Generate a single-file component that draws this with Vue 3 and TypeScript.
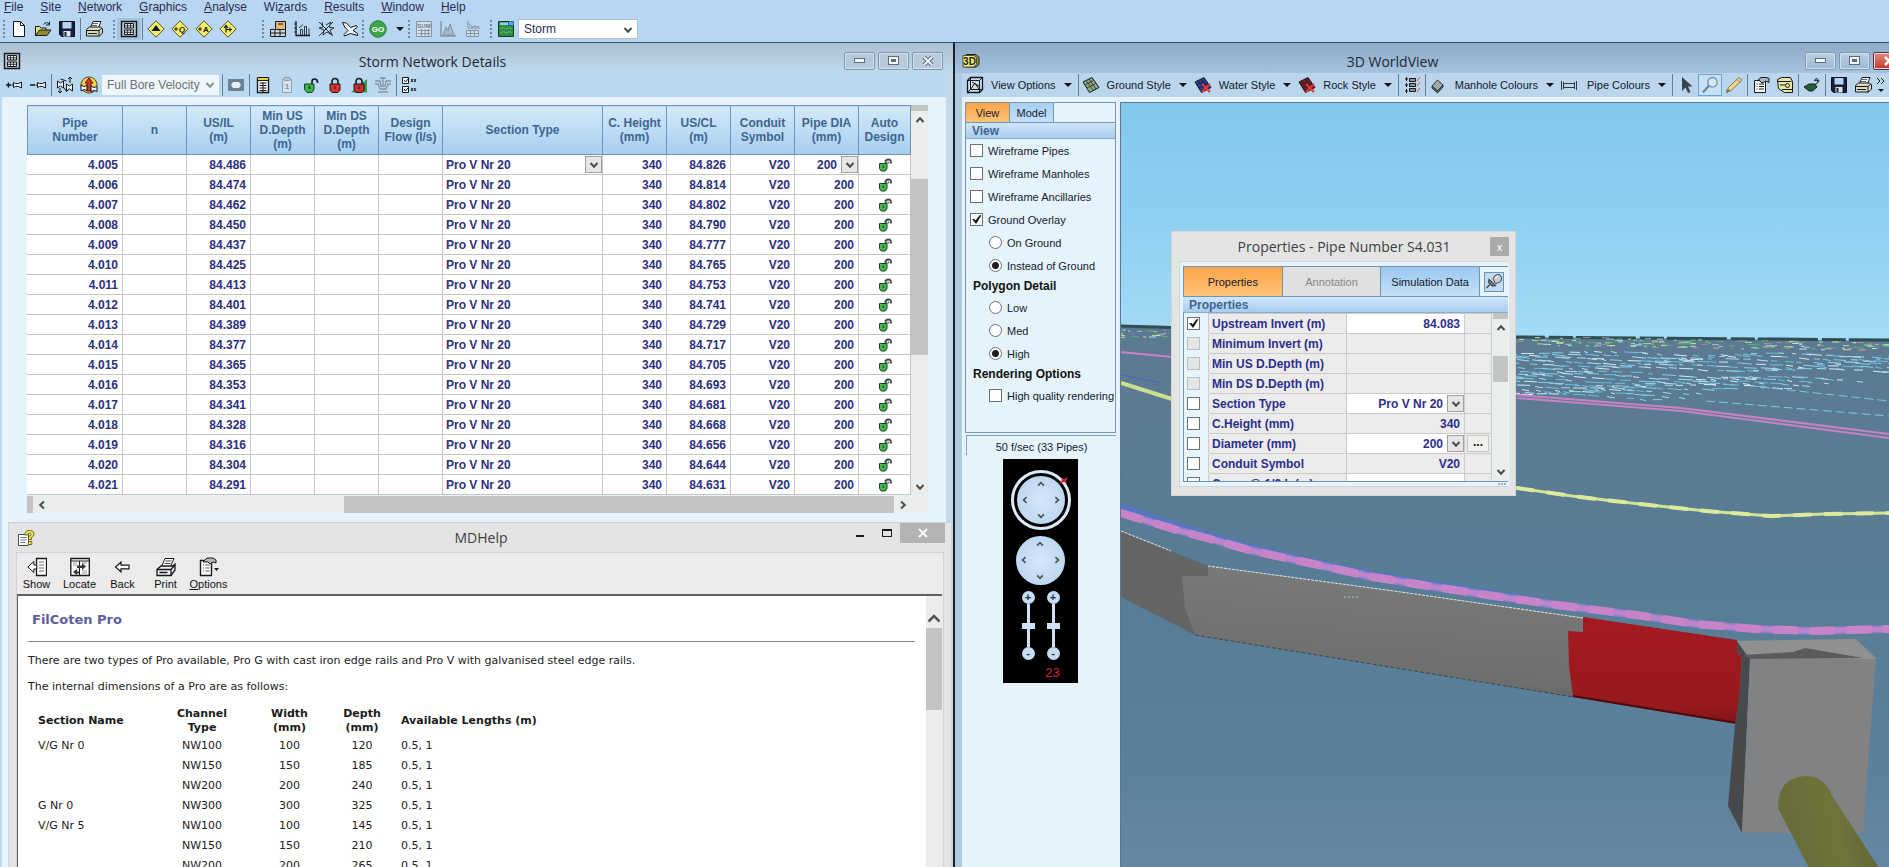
<script setup lang="ts">
import { h, ref } from 'vue'

type Stroke = [d: string, fill: string, stroke?: string, width?: number]
type Label = { t: string; x: number; y: number; s: number; c: string }
type Glyph = Stroke | Label

const K = '#15181c'
const diamond: Stroke = ['M9 .8L17.2 9 9 17.2.8 9z', '#f3ee62', '#55563a']
const printer: Glyph[] = [
  ['M5.5 7.5l2.5-6h8l-2.5 6z', '#fff', K],
  ['M8 3.5h5M7 5.5h5', 'none', '#666'],
  ['M1.500 9.500l3-2.500h11l2 2v4l-3 3h-13z', '#d9dcc2', K],
  ['M1.500 10.500h12.500v6M14 10.500l3-2.500M3 13.500h9', 'none', K],
]
const disk: Glyph[] = [
  ['M1.500 1.500h15v15h-13l-2-2z', '#16203a', '#0b1020'],
  ['M4.500 2h9v6.500h-9z', '#b5d3ee'],
  ['M5.500 11h7v5.500h-7z', '#dfe6ee'],
  ['M6.500 12h2v4h-2z', '#16203a'],
]
const lock = (c: string): Glyph[] => [
  ['M6 8V5.500q0-3 3-3t3 3V8', 'none', K, 1.600],
  ['M4 8h10v6l-2 2.500H6L4 14z', c, K],
  ['M9 10v3', 'none', '#333', 1.500],
]
const meshTile = (a: string): Glyph[] => [
  ['M1 6l9-4.500 7 10-9.500 5z', a, '#141820'],
  ['M4 4.500l7.500 10M7 3l7 10M3 9l8.500-4.500M5 12l8.500-4.500', 'none', '#1b2228', 0.8],
]
const cross: Stroke = ['M8 8l8 8M16 8l-8 8', 'none', '#e23438', 2.200]

const icons: Record<string, Glyph[]> = {
  page: [['M3.500 1.500h7l4 4v11h-11z', '#fff', K], ['M10.500 1.500v4h4', 'none', K]],
  open: [
    ['M1.500 15.500v-9h4l1.500 1.500h5v3', '#e6e27a', K],
    ['M1.500 15.500l4-5.500h11.500l-4 5.500z', '#8f8e2e', K],
    ['M9.500 4.500q3-3.500 5.500-.5M15.500 1.500V5h-3.500', 'none', K],
  ],
  save: disk,
  print: printer,
  grid: [
    ['M1.500 1.500h15v15h-15z', '#b9c6d2', K, 1.400],
    ['M4.500 3.500h9v4.500h-9zM4.500 10h9v4.500h-9z', '#e4ebf2', K],
    ['M4.500 5.800h9M7.500 3.500v4.500M10.500 3.500v4.500M4.500 12.300h9M7.500 10v4.500M10.500 10v4.500', 'none', K, 0.8],
  ],
  dTri: [diamond, ['M9 5l4.500 6h-9z', K]],
  dQ: [diamond, ['M3 9h4M5 7v4', 'none', K], { t: 'Q', x: 11, y: 12, s: 8, c: K }],
  dA: [diamond, ['M3 9h4M5 7v4', 'none', K], { t: 'A', x: 11, y: 12, s: 8, c: K }],
  dArr: [diamond, ['M7 12.500V6M5 8l2-2.500L9 8M7 9.500h6M11 7.500v4', 'none', K, 1.200]],
  cube: [
    ['M6.500 1.500h10v8h-10z', '#e2b978', K],
    ['M1.500 9.500h15v7h-15z', '#cfd6dc', K],
    ['M1.500 13h15M6 9.500v7M11 9.500v7M9 4h5', 'none', K],
  ],
  chart: [
    ['M3 1v14.500h14', 'none', K, 1.300],
    ['M1 4h3M1 8h3M1 12h3M7.500 15V9.500h2V15M11.500 15V6.500h2V15M16 15V8.500M6 8l4-3.500', 'none', '#33383e'],
  ],
  fish: [['M2 2l14 14M5 2l1 5-4 1 5 2-1 5 4-3 5 3-2-5 4-2-5-1 2-5-5 3M2 16L16 2', 'none', '#2c3136', 1]],
  plane: [['M1.500 2.500l4 .5 4 4.500 6-2 1 1.500-4.500 3.500 4.500 3v2l-7-2-6 2.500-.5-1.500 4-4-3-3z', '#eef3f7', K]],
  go: [
    ['M9 .8a8.200 8.200 0 1 0 .01 0z', '#3aa648', '#2a7a35'],
    { t: 'GO', x: 9, y: 12, s: 8, c: '#fff' },
  ],
  sum: [
    ['M1.500 1.500h15v15h-15z', '#d3dfe9', '#8494a2'],
    { t: 'SUM', x: 9, y: 8, s: 6, c: '#6b7b89' },
    ['M3 10.500h12M3 13.500h12M6.500 9v7M10 9v7M13.500 9v7', 'none', '#8494a2'],
  ],
  peak: [['M2 1v15h15', 'none', '#8494a2', 1.400], ['M4 15l3-8 2 4 2-7 4 11z', '#a7b8c7', '#8494a2']],
  plot: [['M5 1v7h12M5 3l4 4 3-1 4 1', 'none', '#8494a2'], ['M3.500 10.500h12v6h-12zM3.500 13.500h12M7.500 10.500v6M11.500 10.500v6', '#d3dfe9', '#8494a2']],
  book: [
    ['M1.500 1.500h11l4 4v11h-15z', '#2e8d45', '#143c1f'],
    ['M3 2.500h8v2.500H3z', '#8fd0f0'],
    ['M3.500 9l3-1.500 3 1.500 3-1.500 2 1M3.500 13l3-1.500 3 1.500 3-1.500 2 1', 'none', '#5fc06d'],
    ['M11.500 1.500h5v4h-5z', '#58aee0', '#1e4f80', 0.8],
  ],
  pipeAdd: [['M1 9h5M3.500 6.500v5', 'none', K, 1.500], ['M6.500 9h2M8.500 6.500l2 1h3l3-1.500v6l-3-1.500h-3l-2 1z', '#e8eef4', K]],
  pipeDel: [['M1 9h5', 'none', K, 1.500], ['M6.500 9h2M8.500 6.500l2 1h3l3-1.500v6l-3-1.500h-3l-2 1z', '#e8eef4', K]],
  pipeSet: [
    ['M4 12v5M2 15l2 2 2-2M14 1v6M12 3l2-2 2 2', 'none', K],
    ['M1.500 5l3 2 3-2v7l-3-2-3 2zM10.500 8l3 2 3-2v7l-3-2-3 2z', '#eef3f7', K],
    ['M4.500 3l6 2M8 12l3 4', 'none', K],
  ],
  pipeWarn: [
    ['M9 1a8 8 0 1 0 .01 0z', '#f3d447', '#524b20'],
    ['M5 7l4-5 4 5h-2v8H7V7z', '#c93a2c', '#561410'],
    ['M1 9l3 1.500 3-1v5l-3-1-3 1.500zM11 10l3 1.500 3-1v5l-3-1-3 1z', '#eef3f7', K],
  ],
  outline: [['M1 3h16v12H1z', '#6c8096'], ['M6 6h6l2 3-2 3H6L4 9z', '#e6eff8']],
  sheet: [
    ['M3.500 2.500h11v14h-11z', '#fff', K, 1.400],
    ['M3.500 1.500h11v3h-11z', '#ecd23d', K],
    ['M5.500 7h7M5.500 9.500h7M5.500 12h7M5.500 14.500h7M9 6v10', 'none', K],
  ],
  sheetOff: [['M4.500 3.500h9v13h-9z', '#d5e3ef', '#8fa0b0'], ['M6 1.500h6v3H6z', '#b9c8d5', '#8fa0b0'], { t: '1', x: 9, y: 13, s: 8, c: '#8494a2' }],
  unlock: [
    ['M10 8V5.500q0-2.500 2.500-2.500t3 2.500V7', 'none', K, 1.600],
    ['M2.500 8h9.500v5.500l-2 3H5l-2.500-3z', '#3fae4c', '#15451c'],
    ['M7.500 10v3', 'none', '#12361a', 1.500],
  ],
  lock: lock('#e0302f'),
  lockHill: [['M1 16.500h16V3z', '#3a9a3f'], ...lock('#d42a2a')],
  section: [['M1 5h5l1 5h4l1-5h5M1 8h3l2 5h6l2-5h3M9 1v8M6 2h6M4 16h10', 'none', '#8494a2', 1.300]],
  checks: [
    ['M1.500 1.500h6v6h-6zM1.500 10.500h6v6h-6z', '#fff', K],
    ['M3 4l1.500 2L8 2M3 13l1.500 2L8 11', 'none', K],
    ['M10 3l2 3M12 3l-2 3M13 3l2 3M15 3l-2 3M10 12l2 3M12 12l-2 3M13 12l2 3M15 12l-2 3', 'none', K, 0.9],
  ],
  threeD: [
    ['M4 2.500h10l3 3v7l-3 2.500H4', '#8f8c35', '#222'],
    ['M1 3.500h11l2.500 2.500v6L12 15H1z', '#efe97a', '#35351c', 0.8],
    { t: '3D', x: 7.500, y: 13, s: 10, c: '#22241a' },
  ],
  wire: [
    ['M1.500 4.500l3-3h12v12l-3 3h-12z', '#cddbe6', K, 1.300],
    ['M1.500 4.500h12v12M13.500 4.500l3-3M4.500 1.500v12h12M1.500 16.500l3-3M4 14l5-7 4 6M6 6l7 4', 'none', K],
  ],
  ground: meshTile('#8fae84'),
  water: [...meshTile('#2c3c94'), cross],
  rock: [...meshTile('#7c1a24'), cross],
  legend: [
    ['M2 3h3M2 9h3M2 15h3M3.500 1v4M3.500 7v4M3.500 13v4', 'none', K],
    ['M6.500 2.500h6v3h-6zM6.500 7.500h6v3h-6zM6.500 12.500h6v3h-6z', '#8a95a0', K],
    ['M14 5l3-4M14 10l3-4M14 16l3-4', 'none', '#d95560'],
  ],
  block: [['M4 10l5.500-6 5.500 5-5.500 6z', '#a2a8ae', '#33383c'], ['M4 10v2l5.500 5 5.500-6V9l-5.500 6z', '#666c72', '#33383c']],
  pipe: [['M1.500 5v9M16.500 5v9M3.500 6v7M14.500 6v7M3.500 7.500h11M3.500 11.500h11', 'none', '#333a42', 1]],
  cursor: [['M5 1v14l3.500-3.500 2.500 5.500 2.500-1-2.500-5.500h4.500z', '#39424c']],
  lens: [['M11.500 1.500a4.800 4.800 0 1 0 .01 0z', '#d3e8f8', '#7690a5', 1.300], ['M8 9.500L2 16.500', 'none', '#6b8296', 2]],
  pencil: [['M1.500 16.500l2-5L14 1.500l3 2.500L6 14.500z', '#efd98a', '#8a7a48'], ['M12 3.500l3 3M1.500 16.500l3-1.500-2-2z', '#6d5c38', '#8a7a48']],
  props: [
    ['M2.500 4.500h11v12h-11z', '#fff', K],
    ['M4.500 8h1M4.500 10.500h1M4.500 13h1M7 8h5M7 10.500h5M7 13h5', 'none', K],
    ['M6 4l3-2.500h5l3 1v4l-3-1.500-4 2-2-2z', '#aeb9c4', K],
  ],
  tape: [
    ['M1.500 3.500l4-2h9l2 4v11h-8l-6-4z', '#e9e7a0', K],
    ['M1.500 5.500h14M4 9h5M9.500 9.500a2 2 0 1 0 4 0 2 2 0 1 0-4 0M6 13.500h10', 'none', K],
  ],
  pond: [['M1 11l5-3h6l2 3-4.500 4H6z', '#235d38', '#0e2a18'], ['M12 8.500l3-2V3.500l-2-1-1.500 2 5 .5', 'none', K]],
  help: [
    ['M1.500 5.500h10v11h-10z', '#fff', '#4c5058'],
    ['M3.500 8.500h6M3.500 11h6M3.500 13.500h5', 'none', '#70747c'],
    ['M8 5q0-3.500 4.500-3.500T17 5q0 2.500-2.500 3.500v2h-3V7.500q2.500-.5 2.500-2t-1.500-1.500-1.700 2H8zM11.300 12.500h3.500v3h-3.500z', '#ece53c', '#4c4a1a', 0.8],
  ],
  pin: [['M8 6q1-4 4.500-4.500t4 3.500-4 5l-2 .5z', '#c3c9cf', '#3d444b'], ['M4 6.500l6.500 6-3 .5-4-3.500zM5.500 11L1.500 15', '#8d949b', '#3d444b', 1.200], ['M10.500 5l2.500-2', 'none', '#fff', 1.500]],
}
const bigIcons: Record<string, Glyph[]> = {
  show: [['M9.500 1.500h10v17h-10z', '#fff', K, 1.300], ['M12 5h5M12 8h5M12 11h5M12 14h5', 'none', '#666'], ['M.8 10l6-5.500V8h3v4h-3v3.500z', '#fff', K]],
  locate: [
    ['M.8 1.500h18.500v17H.8z', '#fff', K, 1.300],
    ['M.8 4h18.500M9.500 4v14', 'none', K],
    ['M12 6h5M12 14h5M12 16h5M3 6h4M3 8h4', 'none', '#999'],
    ['M7 8.500h5V6l4 3.500-4 3.500v-2H7zM9 14.500H7V12l-4 3 4 3v-1.500h2z', '#33373c'],
  ],
  back: [['M2.500 10l5.500-5v3.200h8v3.600H8V15z', '#fff', K, 1.200]],
  print: [
    ['M5.500 9.500L9 1.500h9l-3.500 8z', '#fff', K],
    ['M9.500 4h6M8.500 6.500h6', 'none', '#444'],
    ['M1 12.500l4-3.500h12l2-2v6l-4 5.500H1z', '#f2f2f2', K, 1.300],
    ['M1 12.500h14v6M15 12.500l4-4.500M3.500 15.500h8', 'none', K, 1.300],
  ],
  options: [
    ['M1.500 3.500h11v15h-11z', '#fff', K, 1.400],
    ['M4 8h1M4 11h1M4 14h1M6.500 8h4M6.500 11h4M6.500 14h4', 'none', '#555', 1.200],
    ['M4 5l4-4h6l3 2v3l-3-1-3 2-2-2z', '#b6b6b6', K],
    ['M15 11h5l-2.500 3z', K],
  ],
}

const draw = (set: Record<string, Glyph[]>, box: number) => (p: { name: string }) =>
  h(
    'svg',
    { viewBox: `0 0 ${box} ${box}`, width: box, height: box, 'aria-hidden': 'true' },
    set[p.name].map((g) =>
      Array.isArray(g)
        ? h('path', { d: g[0], fill: g[1], stroke: g[2] ?? 'none', 'stroke-width': g[3] ?? 1 })
        : h('text', { x: g.x, y: g.y, 'font-size': g.s, fill: g.c, 'text-anchor': 'middle', 'font-weight': 'bold', 'font-family': 'Liberation Sans, Arial, sans-serif' }, g.t),
    ),
  )
const Icon = Object.assign(draw(icons, 18), { props: ['name'] })
const BigIcon = Object.assign(draw(bigIcons, 20), { props: ['name'] })

const Chevron = Object.assign(
  (p: { dir?: string }) =>
    h('svg', { viewBox: '0 0 10 10', width: 10, height: 10, 'aria-hidden': 'true' }, [
      h('path', {
        d: { up: 'M1.500 7L5 3.200 8.500 7', down: 'M1.500 3L5 6.800 8.500 3', left: 'M7 1.500L3.200 5 7 8.500', right: 'M3 1.500L6.800 5 3 8.500' }[p.dir ?? 'down'],
        fill: 'none', stroke: '#4a4d50', 'stroke-width': 2,
      }),
    ]),
  { props: ['dir'] },
)

const menus = [['', 'F', 'ile'], ['', 'S', 'ite'], ['', 'N', 'etwork'], ['', 'G', 'raphics'], ['', 'A', 'nalyse'], ['Wi', 'z', 'ards'], ['', 'R', 'esults'], ['', 'W', 'indow'], ['', 'H', 'elp']]
const mainTools = [['page', 'open', 'save', '|', 'print'], ['grid', '|', 'dTri', 'dQ', 'dA', 'dArr'], ['cube', 'chart', 'fish', 'plane'], ['go'], ['sum', 'peak', 'plot'], ['book']]

const columns = [
  { label: 'Pipe\nNumber', w: 95 }, { label: 'n', w: 64 }, { label: 'US/IL\n(m)', w: 64 }, { label: 'Min US\nD.Depth\n(m)', w: 64 },
  { label: 'Min DS\nD.Depth\n(m)', w: 64 }, { label: 'Design\nFlow (l/s)', w: 64 }, { label: 'Section Type', w: 160 }, { label: 'C. Height\n(mm)', w: 64 },
  { label: 'US/CL\n(m)', w: 64 }, { label: 'Conduit\nSymbol', w: 64 }, { label: 'Pipe DIA\n(mm)', w: 64 }, { label: 'Auto\nDesign', w: 52 },
]
const il = [486, 474, 462, 450, 437, 425, 413, 401, 389, 377, 365, 353, 341, 328, 316, 304, 291]
const rows = il.map((v, i) => ({ id: `4.${String(i + 5).padStart(3, '0')}`, il: `84.${v}`, cl: `84.${v + 340}` }))

const helpTools = [['show', '', 'Show'], ['locate', '', 'Locate'], ['back', '', 'Back'], ['print', '', 'Print'], ['options', 'O', 'ptions']]
const sizes = [
  ['V/G Nr 0', 'NW100', 100, 120], ['', 'NW150', 150, 185], ['', 'NW200', 200, 240], ['G Nr 0', 'NW300', 300, 325],
  ['V/G Nr 5', 'NW100', 100, 145], ['', 'NW150', 150, 210], ['', 'NW200', 200, 265],
]
const styles = [['wire', 'View Options'], ['ground', 'Ground Style'], ['water', 'Water Style'], ['rock', 'Rock Style']]
const colours = [['block', 'Manhole Colours'], ['pipe', 'Pipe Colours']]

const wire = ref([
  { label: 'Wireframe Pipes', on: false }, { label: 'Wireframe Manholes', on: false },
  { label: 'Wireframe Ancillaries', on: false }, { label: 'Ground Overlay', on: true },
])
const overlay = ref('Instead of Ground')
const detail = ref('High')
const quality = ref(false)
const full = ref('Full Bore Velocity')
const network = ref('Storm')
const speed = ref([50, 50])

const props = ref([
  { label: 'Upstream Invert (m)', value: '84.083', on: true, edit: true }, { label: 'Minimum Invert (m)', value: '', off: true },
  { label: 'Min US D.Depth (m)', value: '', off: true }, { label: 'Min DS D.Depth (m)', value: '', off: true },
  { label: 'Section Type', value: 'Pro V Nr 20', pick: true, edit: true }, { label: 'C.Height (mm)', value: '340' },
  { label: 'Diameter (mm)', value: '200', pick: true, edit: true, more: true }, { label: 'Conduit Symbol', value: 'V20' },
  { label: 'Cover @ 1/2 L (m)', value: '', edit: true },
] as { label: string; value: string; on?: boolean; off?: boolean; pick?: boolean; edit?: boolean; more?: boolean }[])

// Contour lines on the distant ground: a seeded generator keeps them stable between renders.
let seed = 7
const rnd = () => ((seed = (seed * 16807) % 2147483647) / 2147483647)
const specks: { d: string; c: string }[] = []
for (let i = 0; i < 300; i++) {
  const x = rnd() * 768
  const y = 226 + x * 0.018 + rnd() * 9
  specks.push({ d: `M${x.toFixed()} ${y.toFixed(1)}h${(2 + rnd() * 6).toFixed()}`, c: ['#8fe3a0', '#c9dc8c', '#a8e6ee', '#a98a98', '#5fae7c', '#a5c4ce'][Math.floor(rnd() * 6)] })
}
for (let row = 0; row < 15; row++) {
  const y0 = 249 + row * 3
  const end = row < 6 ? 768 : 768 - (row - 5) * 26
  for (let x = 340 + rnd() * 10; x < end; x += 5 + rnd() * 15) {
    const y = y0 + Math.sin(x / 28 + row) * 1.5 + (x - 396) * (row < 6 ? 0.01 : 0.03) - (row > 9 ? Math.max(0, x - 560) * 0.1 : 0)
    const len = 4 + rnd() * 11
    specks.push({ d: `M${x.toFixed()} ${y.toFixed(1)}l${len.toFixed()} ${(rnd() * 1.6).toFixed(1)}`, c: ['#82d0e8', '#a8dfee', '#d2edf4', '#6cc0dc'][Math.floor(rnd() * 4)] })
  }
}
const pinkPts = [[0, 410], [56, 427], [93, 437], [128, 447], [188, 460], [252, 474], [307, 483], [366, 492], [436, 502], [515, 512], [575, 521], [635, 526], [694, 528], [768, 526]]
const yellowPts = [[396, 385], [451, 393], [510, 400], [585, 408], [650, 413], [704, 411], [768, 410]]
const line = (p: number[][]) => 'M' + p.map((q) => q.join(' ')).join('L')
</script>

<template>
  <div class="app">
    <header class="main-bar">
      <nav class="menus">
        <a v-for="m in menus" :key="m.join('')" href="#">{{ m[0] }}<u>{{ m[1] }}</u>{{ m[2] }}</a>
      </nav>
      <div class="tools main-tools">
        <div v-for="(g, gi) in mainTools" :key="gi" class="group" :class="'g' + gi">
          <i class="grip" />
          <template v-for="(t, ti) in g" :key="ti">
            <i v-if="t === '|'" class="sep" />
            <button v-else class="tool" :class="{ pressed: t === 'grid' }" :aria-label="t"><Icon :name="t" /></button>
          </template>
          <i v-if="gi === 3" class="caret" />
        </div>
        <label class="combo net"><select v-model="network" aria-label="Network"><option>Storm</option><option>Foul</option></select><Chevron /></label>
      </div>
    </header>

    <main class="desk">
      <section class="win details">
        <div class="title">
          <Icon name="grid" />
          <h1>Storm Network Details</h1>
          <div class="win-btns">
            <button aria-label="Minimise"><i class="g-min" /></button>
            <button aria-label="Restore"><i class="g-max" /></button>
            <button aria-label="Close"><svg width="12" height="10" viewBox="0 0 12 10"><path d="M2 1l8 8M10 1L2 9" stroke="#5c6b78" stroke-width="4" /><path d="M2 1l8 8M10 1L2 9" stroke="#f3f7fa" stroke-width="2" /></svg></button>
          </div>
        </div>
        <div class="tools sub">
          <button class="tool" aria-label="Add pipe"><Icon name="pipeAdd" /></button>
          <button class="tool" aria-label="Delete pipe"><Icon name="pipeDel" /></button>
          <i class="sep" />
          <button class="tool" aria-label="Reorder pipes"><Icon name="pipeSet" /></button>
          <button class="tool" aria-label="Check pipes"><Icon name="pipeWarn" /></button>
          <label class="combo bore"><select v-model="full" disabled aria-label="Quantity"><option>Full Bore Velocity</option></select><Chevron /></label>
          <i class="sep" />
          <button class="tool" aria-label="Outline"><Icon name="outline" /></button>
          <i class="sep" />
          <button v-for="t in ['sheet', 'sheetOff', 'unlock', 'lock', 'lockHill', 'section']" :key="t" class="tool" :aria-label="t"><Icon :name="t" /></button>
          <i class="sep" />
          <button class="tool" aria-label="Columns"><Icon name="checks" /></button>
        </div>

        <div class="client">
          <div class="sheet">
            <table class="pipes">
              <colgroup><col v-for="c in columns" :key="c.label" :style="{ width: c.w + 'px' }" /></colgroup>
              <thead><tr><th v-for="c in columns" :key="c.label" scope="col">{{ c.label }}</th></tr></thead>
              <tbody>
                <tr v-for="(r, i) in rows" :key="r.id">
                  <td>{{ r.id }}</td><td /><td>{{ r.il }}</td><td /><td /><td />
                  <td class="left">
                    <label v-if="i === 0" class="combo cell"><select aria-label="Section type"><option>Pro V Nr 20</option></select><span class="drop"><Chevron /></span></label>
                    <template v-else>Pro V Nr 20</template>
                  </td>
                  <td>340</td><td>{{ r.cl }}</td><td>V20</td>
                  <td :class="{ picker: i === 0 }">
                    <label v-if="i === 0" class="combo cell end"><select aria-label="Pipe diameter"><option>200</option></select><span class="drop"><Chevron /></span></label>
                    <template v-else>200</template>
                  </td>
                  <td class="mid"><svg class="mini" viewBox="0 0 14 14" width="14" height="14"><path d="M7.500 6V4q0-2.500 2.800-2.500t2.700 2.500v1.500" fill="none" stroke="#3c4a44" stroke-width="1.800" /><path d="M9.800 5.500v-1.200h1.200v1" fill="none" stroke="#3c4a44" /><path d="M1.500 5.500h7.500v5L7.300 13H3.200l-1.700-2.500z" fill="#46b552" stroke="#15451c" /><path d="M5.200 7.500v2.500" stroke="#12361a" /></svg></td>
                </tr>
              </tbody>
            </table>
            <div class="vbar"><i class="stub" /><button aria-label="Scroll up"><Chevron dir="up" /></button><i class="gap" /><i class="thumb" /><i class="rest" /><button aria-label="Scroll down"><Chevron /></button></div>
            <div class="hbar"><i class="stub" /><button aria-label="Scroll left"><Chevron dir="left" /></button><i class="gap" /><i class="thumb" /><button aria-label="Scroll right"><Chevron dir="right" /></button></div>
            <i class="corner" />
          </div>

          <section class="help">
            <div class="help-title">
              <Icon name="help" />
              <h2>MDHelp</h2>
              <div class="help-btns"><button aria-label="Minimise"><i class="h-min" /></button><button aria-label="Maximise"><i class="h-max" /></button><button class="x" aria-label="Close"><svg width="10" height="10" viewBox="0 0 10 10"><path d="M1 1l8 8M9 1L1 9" stroke="#fff" stroke-width="1.800" /></svg></button></div>
            </div>
            <div class="help-body">
              <div class="help-tools"><button v-for="t in helpTools" :key="t[0]"><BigIcon :name="t[0]" /><span><u>{{ t[1] }}</u>{{ t[2] }}</span></button></div>
              <div class="help-view">
                <article>
                  <h3>FilCoten Pro</h3>
                  <hr />
                  <p>There are two types of Pro available, Pro G with cast iron edge rails and Pro V with galvanised steel edge rails.</p>
                  <p>The internal dimensions of a Pro are as follows:</p>
                  <table class="dims">
                    <thead><tr><th class="c1">Section Name</th><th class="c2">Channel<br />Type</th><th class="c3">Width<br />(mm)</th><th class="c4">Depth<br />(mm)</th><th class="c5">Available Lengths (m)</th></tr></thead>
                    <tbody><tr v-for="(s, i) in sizes" :key="i"><td class="c1">{{ s[0] }}</td><td>{{ s[1] }}</td><td>{{ s[2] }}</td><td>{{ s[3] }}</td><td class="c5">0.5, 1</td></tr></tbody>
                  </table>
                </article>
                <div class="vbar wide"><button aria-label="Scroll up"><svg width="14" height="10" viewBox="0 0 14 10"><path d="M1.500 8.500L7 3l5.500 5.500" fill="none" stroke="#55585b" stroke-width="2.600" /></svg></button><i class="thumb" /></div>
              </div>
            </div>
          </section>
        </div>
      </section>

      <section class="win world">
        <div class="title">
          <Icon name="threeD" />
          <h1>3D WorldView</h1>
          <div class="win-btns">
            <button aria-label="Minimise"><i class="g-min" /></button>
            <button aria-label="Restore"><i class="g-max" /></button>
            <button class="red" aria-label="Close"><svg width="12" height="10" viewBox="0 0 12 10"><path d="M2 1l8 8M10 1L2 9" stroke="#fff" stroke-width="2.600" /></svg></button>
          </div>
        </div>
        <div class="tools sub">
          <template v-for="(s, i) in styles" :key="s[1]">
            <button class="drop-tool"><Icon :name="s[0]" /><span>{{ s[1] }}</span><i class="caret" /></button>
            <i v-if="i === 0 || i === 3" class="sep" />
          </template>
          <button class="tool" aria-label="Legend"><Icon name="legend" /></button><i class="sep" />
          <button v-for="s in colours" :key="s[1]" class="drop-tool wide-gap"><Icon :name="s[0]" /><span>{{ s[1] }}</span><i class="caret" /></button>
          <i class="sep" />
          <button class="tool" aria-label="Select"><Icon name="cursor" /></button>
          <button class="tool picked" aria-label="Inspect"><Icon name="lens" /></button>
          <button class="tool" aria-label="Edit"><Icon name="pencil" /></button><i class="sep" />
          <button class="tool" aria-label="Properties"><Icon name="props" /></button>
          <button class="tool" aria-label="Measure"><Icon name="tape" /></button><i class="sep" />
          <button class="tool" aria-label="Pond"><Icon name="pond" /></button><i class="sep" />
          <button class="tool" aria-label="Save"><Icon name="save" /></button>
          <button class="tool" aria-label="Print"><Icon name="print" /></button>
          <button class="more" aria-label="More tools"><svg width="9" height="16" viewBox="0 0 9 16"><path d="M1 1l3 3-3 3M5 1l3 3-3 3" fill="none" stroke="#222" /><path d="M2 12h6l-3 3z" fill="#111" /></svg></button>
        </div>

        <div class="world-body">
          <aside class="side">
            <div class="panel">
              <div class="tabs"><button class="on">View</button><button>Model</button></div>
              <div class="head">View</div>
              <label v-for="w in wire" :key="w.label" class="opt"><input v-model="w.on" type="checkbox" />{{ w.label }}</label>
              <label v-for="o in ['On Ground', 'Instead of Ground']" :key="o" class="opt in"><input v-model="overlay" type="radio" name="overlay" :value="o" />{{ o }}</label>
              <h4>Polygon Detail</h4>
              <label v-for="o in ['Low', 'Med', 'High']" :key="o" class="opt in"><input v-model="detail" type="radio" name="detail" :value="o" />{{ o }}</label>
              <h4>Rendering Options</h4>
              <label class="opt in"><input v-model="quality" type="checkbox" />High quality rendering</label>
            </div>
            <div class="rate">50 f/sec (33 Pipes)</div>
            <div class="joy">
              <div class="ring"><div class="pad"><button v-for="d in ['up', 'left', 'right', 'down']" :key="d" :class="d" :aria-label="'Rotate ' + d"><Chevron :dir="d" /></button></div>
                <svg class="mark" width="9" height="8" viewBox="0 0 9 8"><path d="M0 7l3-4-1-2 3 1 4-2-2 4 1 2-3-1z" fill="#d8242c" /></svg>
              </div>
              <div class="pad"><button v-for="d in ['up', 'left', 'right', 'down']" :key="d" :class="d" :aria-label="'Move ' + d"><Chevron :dir="d" /></button></div>
              <div class="sliders">
                <div v-for="(s, i) in speed" :key="i"><button aria-label="Increase">+</button><input v-model="speed[i]" type="range" :aria-label="'Speed ' + (i + 1)" /><button aria-label="Decrease">-</button></div>
              </div>
              <output>23</output>
            </div>
          </aside>

          <div class="view">
            <svg class="scene" viewBox="0 0 768 765" preserveAspectRatio="xMinYMin slice">
              <defs>
                <linearGradient id="sky" x1="0" y1="0" x2="0" y2="1"><stop offset="0" stop-color="#82c9ee" /><stop offset=".5" stop-color="#8fd0f2" /><stop offset="1" stop-color="#a6dcf6" /></linearGradient>
                <linearGradient id="gnd" x1="0" y1="0" x2="0" y2="1"><stop offset="0" stop-color="#5c7a92" /><stop offset=".5" stop-color="#587d96" /><stop offset=".8" stop-color="#5a809c" /><stop offset="1" stop-color="#6688a2" /></linearGradient>
                <linearGradient id="chan" x1="0" y1="0" x2="-.2" y2="1"><stop offset="0" stop-color="#787979" /><stop offset=".7" stop-color="#6d6e6e" /><stop offset="1" stop-color="#55585a" /></linearGradient>
                <linearGradient id="olive" x1="0" y1=".2" x2="1" y2="0"><stop offset="0" stop-color="#686c36" /><stop offset=".5" stop-color="#70733c" /><stop offset="1" stop-color="#5c6030" /></linearGradient>
                <linearGradient id="red" x1="0" y1="0" x2="0" y2="1"><stop offset="0" stop-color="#a51a20" /><stop offset=".85" stop-color="#96191d" /><stop offset="1" stop-color="#7c1317" /></linearGradient>
              </defs>
              <rect width="768" height="240" fill="url(#sky)" />
              <path d="M0 223L396 234 600 236 768 238V765H0z" fill="url(#gnd)" />
              <path d="M0 223L396 234 768 237" fill="none" stroke="#2f4d52" stroke-width="3" stroke-dasharray="60 4 24 3" />
              <path v-for="(s, i) in specks" :key="i" :d="s.d" :stroke="s.c" fill="none" />
              <path d="M585 298L768 313M640 284L768 298" fill="none" stroke="#7cc8de" stroke-dasharray="9 4" />
              <path d="M0 249L51 254M396 292L560 305 768 331M396 295L560 308 768 335" fill="none" stroke="#c882c4" stroke-width="2" />
              <path d="M0 272L40 280" fill="none" stroke="#4b62c0" />
              <path d="M0 280L51 296" fill="none" stroke="#cde092" stroke-width="4" />
              <path :d="line(yellowPts)" fill="none" stroke="#d3e394" stroke-width="3" stroke-linejoin="round" />
              <path :d="line(yellowPts)" fill="none" stroke="#dcea9a" stroke-width="4" stroke-linecap="round" stroke-linejoin="round" stroke-dasharray="16 15" />
              <path d="M0 403L56 422 128 443 188 457 252 471 436 500" fill="none" stroke="#5677c4" stroke-width="5" />
              <path :d="line(pinkPts)" fill="none" stroke="#8f7fca" stroke-width="8" stroke-linejoin="round" />
              <path :d="line(pinkPts)" fill="none" stroke="#b985cb" stroke-width="5" stroke-linejoin="round" />
              <path :d="line(pinkPts)" fill="none" stroke="#c884c8" stroke-width="8" stroke-linecap="round" stroke-linejoin="round" stroke-dasharray="20 17" />
              <path d="M0 428L87 463 87 476 62 474 74 532 0 494z" fill="#646666" />
              <path d="M87 463L462 514V529H447L448 563 452 594 74 532 64 505 61 473H87z" fill="url(#chan)" />
              <path d="M87 463L280 489 462 515M0 428L50 448" fill="none" stroke="#dfe6e8" stroke-dasharray="3 1" />
              <path d="M223 494h16" stroke="#bcc3c5" stroke-dasharray="2 2" />
              <path d="M74 532L452 594" stroke="#3d454b" stroke-dasharray="4 2" />
              <path d="M462 514L616 537V551L621 552 619 585 616 621 452 594 448 563 447 528 462 529z" fill="url(#red)" />
              <path d="M452 593L616 620" stroke="#4c0d10" stroke-width="2" />
              <path d="M616 538L629 556 621 730 607 703 614 621 619 585 621 552 616 551z" fill="#47494b" />
              <path d="M616 538L735 536 755 554 742 730H621L629 556z" fill="#808284" />
              <path d="M616 538L735 536 755 556H629z" fill="#8e9091" />
              <path d="M622 552L672 549 684 545 742 555 629 556z" fill="#595b5d" />
              <path d="M657 705q0-31 28-32 19 1 25 18L758 765H688z" fill="url(#olive)" />
            </svg>

            <section class="props">
              <div class="props-title"><span /><h2>Properties - Pipe Number S4.031</h2><button aria-label="Close">x</button></div>
              <div class="props-body">
                <div class="props-tabs"><button class="on">Properties</button><button disabled>Annotation</button><button>Simulation Data</button><span><button class="pin" aria-label="Pin"><Icon name="pin" /></button></span></div>
                <div class="head">Properties</div>
                <div class="props-scroll">
                  <table>
                    <colgroup><col class="k0" /><col class="k1" /><col /><col class="k3" /></colgroup>
                    <tbody>
                      <tr v-for="(p, i) in props" :key="p.label">
                        <td class="tick"><input :id="'p' + i" v-model="p.on" type="checkbox" :disabled="p.off" /></td>
                        <td class="name"><label :for="'p' + i">{{ p.label }}</label></td>
                        <td :class="{ edit: p.edit, picker: p.pick }">
                          <label v-if="p.pick" class="combo cell end"><select :aria-label="p.label"><option>{{ p.value }}</option></select><span class="drop"><Chevron /></span></label>
                          <template v-else>{{ p.value }}</template>
                        </td>
                        <td class="dots"><button v-if="p.more">...</button></td>
                      </tr>
                    </tbody>
                  </table>
                  <div class="vbar"><i class="stub" /><button aria-label="Scroll up"><Chevron dir="up" /></button><i class="gap" /><i class="thumb" /><i class="rest" /><button aria-label="Scroll down"><Chevron /></button></div>
                </div>
                <div class="foot"><i /><i /><i /></div>
              </div>
            </section>
          </div>
        </div>
      </section>
    </main>
  </div>
</template>

<style>
html, body { margin: 0; }
</style>
<style scoped>
* { box-sizing: border-box; }
.app { height: 100vh; display: flex; flex-direction: column; overflow: hidden; background: #b4d3ec; font-family: "Liberation Sans", Arial, sans-serif; font-size: 11px; color: #14202c; }
button, select, input { font: inherit; color: inherit; margin: 0; padding: 0; }
button { border: 0; background: none; display: inline-flex; align-items: center; justify-content: center; white-space: nowrap; }
h1, h2, h3, h4, p { margin: 0; }
i { flex: none; }
.main-bar { flex: none; height: 42px; background: #b8d5f1; }
.menus { display: flex; gap: 17px; padding-left: 4px; height: 15px; line-height: 15px; font-size: 12px; }
.menus a { color: #2a2c52; text-decoration: none; }
.tools { display: flex; align-items: center; height: 25px; }
.main-tools { height: 27px; padding-left: 3px; }
.group { display: flex; align-items: center; }
.g0 { margin-right: 7px; }
.g1 { margin-right: 22px; }
.g4 { margin-right: 6px; }
.tool { width: 24px; height: 22px; flex: none; }
.pressed { background: #a3c3df; }
.picked { border: 1px solid #6aa5d8; background: #c6e0f5; }
.grip { width: 3px; height: 18px; margin: 0 1px 0 0; border-left: 2px dotted #6c8aa5; }
.sep { width: 1px; height: 22px; margin: 0 1px; background: #62809c; }
.caret { width: 0; height: 0; border: 4px solid transparent; border-top-color: #111; border-bottom: 0; margin: 0 4px 0 6px; }
.combo { position: relative; display: block; flex: none; }
.combo select { appearance: none; display: block; width: 100%; height: 100%; border: 0; border-radius: 0; background: #fff; padding-left: 5px; opacity: 1; }
.combo > svg { position: absolute; right: 4px; top: 5px; pointer-events: none; }
.net { width: 120px; height: 20px; border: 1px solid #a9c3da; font-size: 12px; color: #2a2c52; }
.bore { width: 117px; height: 20px; margin: 0 2px 0 1px; font-size: 12px; }
.bore select { color: #6d7277; background: #eef5fb; }
.bore svg { opacity: .6; }

.desk { flex: 1; min-height: 0; display: grid; grid-template-columns: 955fr 934fr; }
.win { min-width: 0; min-height: 0; display: flex; flex-direction: column; border-top: 1px solid #34506b; overflow: hidden; }
.details { border-right: 2px solid #17222e; }
.title { flex: none; display: flex; align-items: center; height: 30px; padding: 5px 10px 0 3px; background: linear-gradient(#a8bfd1, #b4cadb 40%, #bfdaf0); }
.title h1 { flex: 1; text-align: center; font: 14px/20px "Open Sans", sans-serif; color: #1f2a34; padding-top: 2px; }
.title svg { flex: none; }
.win-btns { display: flex; gap: 3px; }
.win-btns button { width: 31px; height: 18px; border: 1px solid #8197ac; border-radius: 2px; box-shadow: inset 0 0 0 1px #d3e1ec; background: #b7cadb; }
.g-min { width: 11px; height: 5px; border: 1px solid #5c6b78; background: #f3f7fa; }
.g-max { width: 11px; height: 9px; border: 1px solid #5c6b78; background: #5c6b78; box-shadow: inset 0 0 0 2px #f3f7fa; }
.sub { flex: none; height: 24px; padding-left: 2px; background: #bbd8f1; border-right: 7px solid #c3d9ea; }
.client { flex: 1; min-height: 0; display: flex; flex-direction: column; background: #e5f4fc; padding: 8px 18px 0 25px; border-left: 2px solid #c3d9ea; border-right: 7px solid #c3d9ea; }

.sheet { flex: none; display: grid; grid-template-columns: minmax(0, 1fr) 17px; grid-template-rows: auto 17px; row-gap: 1px; margin-bottom: 9px; }
.pipes { width: 100%; table-layout: fixed; border-collapse: collapse; font-size: 12px; font-weight: bold; color: #2c2f7e; background: #fff; }
.pipes th { height: 49px; padding: 0; border: 1px solid #6f93b2; line-height: 14px; white-space: pre-line; color: #3e6690; background: linear-gradient(#d4e9f8, #a5cef0); }
.pipes td { height: 20px; padding: 0 4px; border: 1px solid #c4c6bf; line-height: 16px; text-align: right; white-space: nowrap; }
.pipes td:first-child { border-left-color: #fff; }
.pipes .left { text-align: left; padding-left: 3px; }
.pipes .mid { text-align: center; padding: 0; }
.mini { display: block; margin: 0 auto; }
.pipes td:has(.cell), .picker { padding: 0 !important; }
.cell { height: 19px; }
.cell select { padding-left: 3px; font-weight: bold; }
.cell.end select { text-align-last: right; padding-right: 21px; }
.drop { position: absolute; right: 0; top: 1px; width: 17px; height: 17px; display: flex; align-items: center; justify-content: center; border: 1px solid #9aa0a4; background: #e6e6e6; pointer-events: none; }
.vbar { display: flex; flex-direction: column; align-items: stretch; background: #ebecec; }
.vbar .stub { height: 6px; background: #c3c3c3; }
.vbar button { height: 17px; flex: none; }
.hbar button { width: 17px; height: 17px; flex: none; }
.vbar .gap { flex: 51 0 0; }
.vbar .thumb { flex: 176 0 0; background: #c3c3c3; }
.vbar .rest { flex: 123 0 0; }
.hbar { display: flex; background: #ebecec; }
.hbar .stub { width: 6px; background: #c3c3c3; }
.hbar .gap { flex: 294 0 0; }
.hbar .thumb { flex: 549 0 0; background: #c3c3c3; }
.corner { background: #ebecec; }

.help { position: relative; flex: 1; min-height: 0; margin: 0 -24px 0 -19px; display: flex; flex-direction: column; background: #e4e4e2; border: 1px solid #cfd2d2; border-bottom: 0; }
.help-title { flex: none; height: 29px; display: grid; grid-template-columns: 1fr auto 1fr; padding: 0 6px 0 8px; }
.help-title > svg { align-self: center; }
.help-title h2 { font: 14px/29px "Open Sans", sans-serif; color: #3c3f42; }
.help-btns { display: flex; justify-content: flex-end; height: 20px; }
.help-btns button { width: 27px; height: 20px; }
.help-btns .x { width: 45px; background: #b3b3b3; }
.h-min { width: 8px; height: 2px; margin-top: 6px; background: #1c1c1c; }
.h-max { width: 10px; height: 8px; border: 1px solid #1c1c1c; border-top-width: 2px; }
.help-body { flex: 1; min-height: 0; display: flex; flex-direction: column; margin: 0 7px; background: #ebebeb; border: 1px solid #d2d2d0; border-bottom: 0; }
.help-tools { flex: none; height: 41px; display: flex; padding: 3px 0 0; margin-left: -2px; }
.help-tools button { flex-direction: column; width: 43px; height: 36px; line-height: 14px; color: #111; }
.help-view { flex: 1; min-height: 0; display: flex; margin: 0 1px 0 0; background: #fff; border-top: 2px solid #5f6162; border-left: 1px solid #5f6162; overflow: hidden; }
.help-view article { flex: 1; padding: 14px 11px 0 10px; font: 11px/16px "DejaVu Sans", Verdana, sans-serif; color: #1b1b1b; }
.help-view h3 { padding-left: 4px; font-size: 13px; line-height: 20px; color: #5e5ea0; }
hr { margin: 11px 0 11px; border: 0; border-top: 1px solid #858585; }
.help-view p { margin-bottom: 10px; }
.wide { width: 16px; flex: none; padding-top: 12px; }
.wide button { height: 20px; }
.wide .thumb { flex: 0 0 82px; }
.dims { border-collapse: collapse; }
.dims th { height: 31px; padding: 0; line-height: 14px; }
.dims td { height: 20px; padding: 0; line-height: 14px; text-align: center; }
.dims .c1 { width: 122px; padding-left: 10px; text-align: left; }
.dims .c2 { width: 104px; }
.dims .c3 { width: 71px; }
.dims .c4 { width: 74px; }
.dims .c5 { padding-left: 2px; text-align: left; }

.world { background: #b0cbe2; }
.world .title { background: linear-gradient(#8eaac7, #a5c2de); padding: 5px 0 0 7px; }
.world .win-btns { margin-right: -15px; }
.world .win-btns button { background: linear-gradient(#b9d0e4, #9db9d3); }
.world .win-btns .red { background: linear-gradient(#e08a80, #c0392f); border-color: #6d2b2b; }
.world .sub { margin-left: 7px; padding-left: 2px; border: 0; background: #bad5ec; white-space: nowrap; overflow: hidden; }
.world .sub .sep { margin: 0 1px; }
.drop-tool { flex: none; }
.drop-tool svg { margin: 0 7px 0 2px; }
.drop-tool.wide-gap svg { margin: 0 9px 0 1px; }
.drop-tool .caret { margin: 0 5px 0 8px; }
.more { width: 12px; flex: none; }
.world-body { flex: 1; min-height: 0; display: flex; margin-left: 7px; padding-top: 5px; background: #e5f4fc; }
.side { flex: none; width: 158px; padding: 0 4px 0 3px; background: #e5f4fc; }
.panel { height: 331px; border: 1px solid #7b97b0; }
.tabs { display: flex; height: 20px; border-bottom: 1px solid #7296b6; }
.tabs button { width: 44px; border-right: 1px solid #7296b6; background: linear-gradient(#a9cff2, #c3dff8); }
.tabs .on, .props-tabs .on { background: linear-gradient(#fda34a, #ffc477); }
.head { height: 16px; padding-left: 6px; font-weight: bold; font-size: 12px; line-height: 16px; color: #3e6690; background: linear-gradient(#cfe6f9, #a9cdee); border-bottom: 1px solid #8cabc6; }
.opt { display: flex; align-items: center; gap: 5px; height: 23px; padding-left: 4px; white-space: nowrap; }
.opt.in { padding-left: 23px; }
.panel h4 { padding-left: 7px; font-size: 12px; line-height: 19px; color: #111; }
input[type="checkbox"] { appearance: none; width: 13px; height: 13px; flex: none; border: 1px solid #6b7075; background: #fff; display: block; }
input[type="checkbox"]:disabled { border-color: #bcbfc1; background: #e4e5e5; }
input[type="checkbox"]:checked::before { content: ""; display: block; width: 11px; height: 11px; background: #111; clip-path: polygon(10% 45%, 30% 45%, 42% 60%, 78% 12%, 95% 12%, 46% 90%); }
input[type="radio"] { appearance: none; width: 13px; height: 13px; flex: none; border: 1px solid #6b7075; border-radius: 50%; background: #fff; }
input[type="radio"]:checked { background: radial-gradient(circle, #1c1c1c 0 3px, #fff 4px); }
.rate { margin: 2px 0 4px 1px; height: 20px; line-height: 22px; text-align: center; border: 1px solid #8aa2b8; border-right: 0; border-bottom: 0; }
.joy { width: 75px; height: 224px; margin: 0 auto; padding-top: 11px; background: #000; display: flex; flex-direction: column; align-items: center; }
.ring { position: relative; width: 60px; height: 60px; padding: 3px; margin-bottom: 6px; border: 3px solid #dce9f6; border-radius: 50%; flex: none; }
.pad { position: relative; width: 49px; height: 49px; border-radius: 50%; background: radial-gradient(circle, #d5e6f8, #b5d2ef); flex: none; }
.ring .pad { width: 48px; height: 48px; }
.pad button { position: absolute; width: 12px; height: 12px; }
.pad svg { width: 8px; height: 8px; }
.pad .up { left: 18px; top: 2px; }
.pad .down { left: 18px; bottom: 2px; }
.pad .left { left: 2px; top: 18px; }
.pad .right { right: 2px; top: 18px; }
.mark { position: absolute; right: 0; top: 4px; }
.sliders { display: flex; gap: 12px; margin-top: 6px; }
.sliders div { display: flex; flex-direction: column; align-items: center; width: 13px; }
.sliders button { width: 13px; height: 13px; border-radius: 50%; background: #c5dcf4; color: #234; font-weight: bold; line-height: 11px; }
.sliders input { appearance: none; writing-mode: vertical-lr; width: 13px; height: 43px; background: linear-gradient(90deg, transparent 5px, #cfe1f4 5px 8px, transparent 8px); }
.sliders input::-webkit-slider-thumb { appearance: none; width: 13px; height: 6px; background: #cfe1f4; }
output { margin: 4px 0 0 24px; font-size: 13px; line-height: 18px; color: #cf2a30; }

.view { position: relative; flex: 1; min-width: 0; overflow: hidden; border: 1px solid #5b7790; border-right: 0; border-bottom: 0; background: #587d96; }
.scene { position: absolute; inset: 0; width: 100%; height: 100%; }
.props { position: absolute; left: 50px; top: 128px; width: 345px; height: 265px; padding: 0 6px 8px 7px; background: #e4e4e3; border: 1px solid #d3d6d6; display: flex; flex-direction: column; }
.props-title { flex: none; height: 29px; display: grid; grid-template-columns: 1fr auto 1fr; align-items: center; }
.props-title h2 { font: 14px/29px "Open Sans", sans-serif; color: #3c3f42; }
.props-title button { justify-self: end; width: 19px; height: 19px; background: #a9abab; color: #fff; }
.props-body { flex: 1; min-height: 0; display: flex; flex-direction: column; padding: 4px 0 0 3px; background: #e8f4fb; border: 1px solid #cbd6de; border-right-color: #e8f4fb; }
.props-tabs { flex: none; display: grid; grid-template-columns: 1fr 1fr 1fr 28px; height: 31px; border-top: 1px solid #6f93b2; border-bottom: 1px solid #6f93b2; border-left: 1px solid #6f93b2; }
.props-tabs > button { border-right: 1px solid #6f93b2; background: linear-gradient(#9ac7f0, #c6e0f7); }
.props-tabs > button:disabled { color: #85898c; background: #e0e0df; }
.props-tabs span { display: flex; align-items: center; justify-content: center; }
.pin { width: 20px; height: 20px; border: 1px solid #6f93b2; background: #c0dcf5; }
.props-scroll { flex: 1; min-height: 0; display: flex; overflow: hidden; border-bottom: 1px solid #6f93b2; border-left: 1px solid #6f93b2; }
.props-scroll table { flex: 1; height: 180px; table-layout: fixed; border-collapse: collapse; font-size: 12px; font-weight: bold; color: #2c2f8e; background: #ebebea; }
.k0 { width: 24px; }
.k1 { width: 138px; }
.k3 { width: 26px; }
.props-scroll td { height: 20px; padding: 0 4px; border: 1px solid #c9ccce; line-height: 16px; text-align: right; white-space: nowrap; }
.props-scroll .tick { padding: 0 0 0 2px; background: #e8f4fb; border-color: #e8f4fb #c9ccce #e8f4fb #e8f4fb; }
.props-scroll .name { padding-left: 3px; text-align: left; }
.props-scroll .edit { background: #fff; }
.props-scroll .dots { padding: 0 2px; }
.dots button { width: 22px; height: 17px; border: 1px solid #c4c7c9; background: #f0f0f0; color: #111; display: flex; line-height: 12px; padding-bottom: 3px; }
.props-scroll .vbar { flex: none; width: 15px; margin-left: 1px; }
.props-scroll .gap { flex: 20 0 0; }
.props-scroll .thumb { flex: 27 0 0; }
.props-scroll .rest { flex: 83 0 0; }
.foot { flex: none; height: 4px; display: flex; justify-content: flex-end; align-items: center; gap: 1px; padding-right: 2px; }
.foot i { width: 2px; height: 2px; background: #a6b0b8; }
</style>
